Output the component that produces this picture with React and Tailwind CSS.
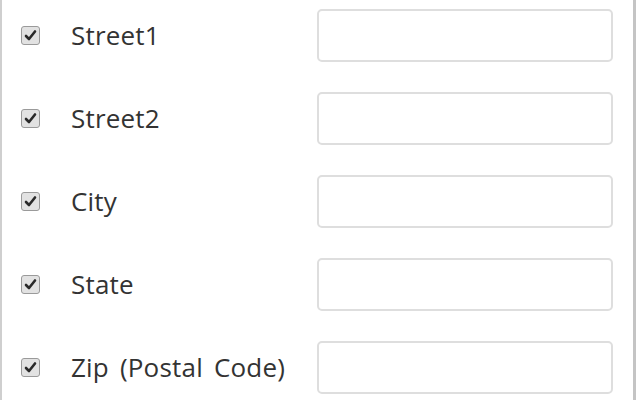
import React from "react";

const fields = ["Street1", "Street2", "City", "State", "Zip (Postal Code)"];

function Check() {
  return (
    <div className="w-[19px] h-[19px] shrink-0 rounded-[3px] border border-[#9a9a9a] bg-[#e2e2e2] flex items-center justify-center">
      <svg width="13" height="13" viewBox="0 0 13 13">
        <path d="M2 7 L5 10 L11 2.5" fill="none" stroke="#2a2a2a" strokeWidth="2.6" strokeLinecap="round" strokeLinejoin="round" />
      </svg>
    </div>
  );
}

export default function App() {
  return (
    <div className="w-[640px] h-[400px] bg-white overflow-hidden flex">
      <div className="w-[633px] h-full border-l-2 border-[#cfcfcf] pt-[9px] pl-[19px] flex flex-col gap-[30px]" style={{ fontFamily: '"Open Sans", "Noto Sans", sans-serif' }}>
        {fields.map((f) => (
          <div key={f} className="flex items-center h-[53px]">
            <Check />
            <div className="w-[277px] pl-[31px] text-[26px] text-[#333] leading-none [word-spacing:4px] tracking-[0.2px] pb-[1px]">{f}</div>
            <div className="w-[296px] h-[53px] border-2 border-[#dedede] rounded-[5px] bg-white" />
          </div>
        ))}
      </div>
      <div className="w-[3px] h-full bg-[#c4c4c4]" />
      <div className="flex-1 h-full bg-white" />
    </div>
  );
}
